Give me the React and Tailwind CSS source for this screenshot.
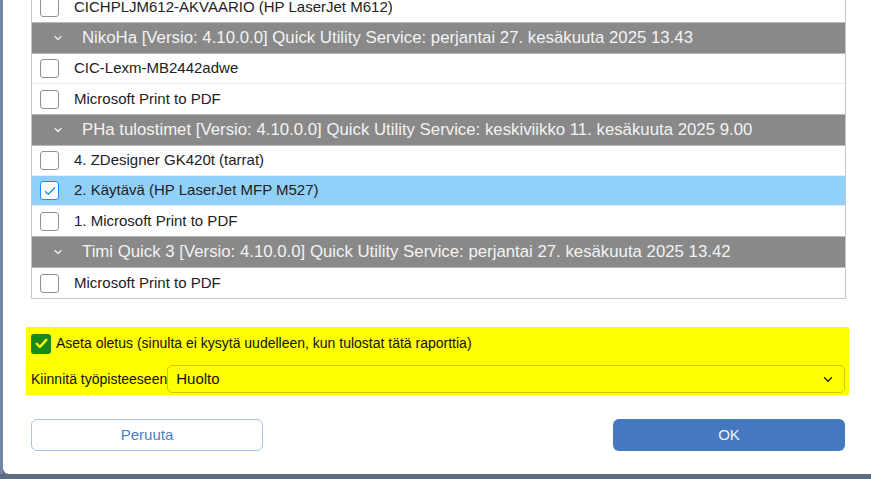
import React from "react";

const groups = [
  {
    title: null,
    printers: [{ name: "CICHPLJM612-AKVAARIO (HP LaserJet M612)" }],
  },
  {
    title: "NikoHa [Versio: 4.10.0.0] Quick Utility Service: perjantai 27. kesäkuuta 2025 13.43",
    printers: [{ name: "CIC-Lexm-MB2442adwe" }, { name: "Microsoft Print to PDF" }],
  },
  {
    title: "PHa tulostimet [Versio: 4.10.0.0] Quick Utility Service: keskiviikko 11. kesäkuuta 2025 9.00",
    printers: [
      { name: "4. ZDesigner GK420t (tarrat)" },
      { name: "2. Käytävä (HP LaserJet MFP M527)", selected: true },
      { name: "1. Microsoft Print to PDF" },
    ],
  },
  {
    title: "Timi Quick 3 [Versio: 4.10.0.0] Quick Utility Service: perjantai 27. kesäkuuta 2025 13.42",
    printers: [{ name: "Microsoft Print to PDF" }],
  },
];

const Chevron = ({ className, width = 1.5 }) => (
  <svg viewBox="0 0 12 8" className={className} fill="none" stroke="currentColor" strokeWidth={width}>
    <path d="M1.5 1.5 L6 6 L10.5 1.5" />
  </svg>
);

const Checkbox = ({ checked }) =>
  checked ? (
    <span className="flex h-[19px] w-[19px] items-center justify-center rounded-[3px] border-[1.5px] border-[#1a8cff] bg-white">
      <svg viewBox="0 0 12 10" className="h-[10px] w-[12px]" fill="none" stroke="#1a8cff" strokeWidth="1.4">
        <path d="M1 5.2 L4.3 8.3 L11 1.5" />
      </svg>
    </span>
  ) : (
    <span className="block h-[19px] w-[19px] rounded-[3px] border-[1.5px] border-[#8b9393] bg-white" />
  );

const App = () => {
  return (
    <div className="flex h-[479px] w-full overflow-hidden bg-[#5d6a80] font-['Liberation_Sans',Arial,sans-serif]">
      <div className="h-[474px] w-[3px] bg-[#7786a0]" />
      <div className="flex h-[474px] flex-1 flex-col overflow-hidden rounded-bl-[6px] bg-white">
        {/* Printer list */}
        <div className="ml-[28px] -mt-[8px] w-[815px] border-x border-b border-[#c4c8cc]">
          {groups.map((group, gi) => (
            <div key={gi}>
              {group.title && (
                <div className="flex h-[32px] items-center border-y border-[#b8b8b8] bg-[#898989] text-[16.8px] text-[#f3f3f3]">
                  <Chevron className="ml-[21px] h-[6px] w-[10px] text-[#f3f3f3]" width={1.8} />
                  <span className="ml-[19px] whitespace-nowrap">{group.title}</span>
                </div>
              )}
              {group.printers.map((p, pi) => (
                <div
                  key={pi}
                  className={`flex h-[30px] items-center border-b border-[#ececec] text-[15px] text-[#222] last:border-b-0 ${
                    p.selected ? "bg-[#91d0f9]" : "bg-white"
                  }`}
                >
                  <span className="ml-[8px]">
                    <Checkbox checked={p.selected} />
                  </span>
                  <span className="ml-[15px] whitespace-nowrap">{p.name}</span>
                </div>
              ))}
            </div>
          ))}
        </div>

        {/* Defaults */}
        <div className="ml-[23px] mt-[28px] w-[823px] bg-[#ffff00] pb-[2px] pl-[5px] pr-[4px] pt-[6px]">
          <div className="flex items-center">
            <span className="flex h-[20px] w-[20px] items-center justify-center rounded-[3px] bg-[#15891a]">
              <svg viewBox="0 0 14 12" className="h-[11px] w-[13px]" fill="none" stroke="#ffff00" strokeWidth="2.6" strokeLinecap="round" strokeLinejoin="round">
                <path d="M1.8 6.3 L5.2 9.8 L12.2 2" />
              </svg>
            </span>
            <span className="ml-[5px] text-[14px] text-[#111]">
              Aseta oletus (sinulta ei kysytä uudelleen, kun tulostat tätä raporttia)
            </span>
          </div>
          <div className="mt-[11px] flex items-center">
            <span className="whitespace-nowrap text-[14px] text-[#111]">Kiinnitä työpisteeseen</span>
            <div className="flex h-[28px] flex-1 items-center justify-between rounded-[5px] border border-[#d4c400] bg-[#ffff00] pl-[8px] pr-[10px] text-[15px] text-[#111]">
              <span>Huolto</span>
              <Chevron className="h-[7px] w-[12px] text-[#222]" />
            </div>
          </div>
        </div>

        {/* Buttons */}
        <div className="ml-[28px] mt-[24px] flex w-[814px] justify-between">
          <button className="h-[32px] w-[232px] rounded-[6px] border border-[#a8c2ee] bg-white text-[15px] text-[#4a7ec8]">
            Peruuta
          </button>
          <button className="h-[32px] w-[232px] rounded-[6px] bg-[#4479bf] text-[15px] text-[#eef3fa]">
            OK
          </button>
        </div>
      </div>
    </div>
  );
};

export default App;
